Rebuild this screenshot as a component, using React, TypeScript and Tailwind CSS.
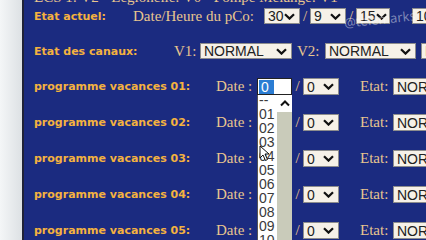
const serif = "font-['Liberation_Serif',serif] text-[15px] leading-none text-[#e8c68f]"
const label = "font-['DejaVu_Sans',Verdana,sans-serif] text-[11px] font-bold leading-none text-[#f4b23f]"

function Chevron() {
  return (
    <svg width="11" height="7" viewBox="0 0 11 7" className="shrink-0">
      <path d="M1 1.2 L5.5 5.6 L10 1.2" fill="none" stroke="#111" strokeWidth="2.2" />
    </svg>
  )
}

function Sel({ value, className }: { value: string; className: string }) {
  return (
    <div
      className={`flex shrink-0 items-center justify-between border border-[#8d8d8d] bg-[#f6f1e8] pl-[3px] pr-[4px] font-['Liberation_Sans',Arial,sans-serif] text-[14px] leading-none text-[#222] ${className}`}
    >
      <span>{value}</span>
      <Chevron />
    </div>
  )
}

const options = ['--', '01', '02', '03', '04', '05', '06', '07', '08', '09', '10', '11']

function OpenSelect() {
  return (
    <div className="relative h-[17px] w-[35px] shrink-0">
      <div className="flex h-full w-full items-start border border-[#222] bg-white pl-px pt-px font-['Liberation_Sans',Arial,sans-serif] text-[14px] leading-none">
        <span className="flex h-[14px] w-[15px] items-center bg-[#2b7dd3] pl-[2px] text-white">0</span>
      </div>
      <div className="absolute left-0 top-full z-10 flex h-[150px] w-[35px] overflow-hidden border-l border-[#555] bg-white">
        <div className="-mt-[2px] flex w-[20px] flex-col font-['Liberation_Sans',Arial,sans-serif] text-[14px] leading-none text-[#3a3a3a]">
          {options.map((o) => (
            <div key={o} className="flex h-[14px] shrink-0 items-center pl-[1px]">
              {o}
            </div>
          ))}
        </div>
        <div className="flex w-[15px] flex-col">
          <div className="flex h-[17px] items-center justify-center bg-white">
            <svg width="10" height="7" viewBox="0 0 10 7">
              <path d="M1 5.5 L5 1.5 L9 5.5" fill="none" stroke="#111" strokeWidth="2" />
            </svg>
          </div>
          <div className="flex-1 bg-[#c9cbba]" />
        </div>
        <svg width="11" height="17" viewBox="0 0 11 17" className="absolute left-[1px] top-[50px]">
          <path d="M1 1 L1 13 L4 10 L6.5 15.5 L8.5 14.5 L6 9 L10 9 Z" fill="#fff" stroke="#111" strokeWidth="1" />
        </svg>
      </div>
    </div>
  )
}

function ProgRow({ n, open }: { n: string; open?: boolean }) {
  return (
    <div className="mt-[19px] flex h-[17px] shrink-0 items-center whitespace-nowrap">
      <span className={`w-[182px] shrink-0 ${label}`}>programme vacances {n}:</span>
      <span className={`w-[41px] shrink-0 ${serif}`}>Date :</span>
      {open ? <OpenSelect /> : <Sel value="0" className="h-[17px] w-[35px]" />}
      <span className={`w-[11px] shrink-0 text-center ${serif}`}>/</span>
      <Sel value="0" className="h-[17px] w-[36px]" />
      <span className={`ml-[21px] w-[33px] shrink-0 ${serif}`}>Etat:</span>
      <Sel value="NORMAL" className="h-[17px] w-[90px]" />
    </div>
  )
}

export default function App() {
  return (
    <div className="flex h-[240px] w-[426px] overflow-hidden bg-[#1b2b80]">
      <div className="w-[22px] shrink-0 bg-gradient-to-r from-[#f4f6f7] to-[#dde1e4]" />
      <div className="w-[2px] shrink-0 bg-[#202338]" />
      <div className="relative min-w-0 flex-1 overflow-hidden pl-[10px]">
        <div className="-mt-[13px] flex flex-col">
          <div className="flex h-[20px] items-center whitespace-nowrap">
            <span className={serif}>ECS 1: V2 - Légionelle: V0 - Pompe Mélange: V1</span>
          </div>

          <div className="mt-[1px] flex h-[16px] items-center whitespace-nowrap">
            <span className={`w-[99px] shrink-0 ${label}`}>Etat actuel:</span>
            <span className={`w-[131px] shrink-0 ${serif}`}>Date/Heure du pCo:</span>
            <Sel value="30" className="h-[16px] w-[36px]" />
            <span className={`w-[10px] shrink-0 text-center ${serif}`}>/</span>
            <Sel value="9" className="h-[16px] w-[36px]" />
            <span className={`w-[10px] shrink-0 text-center ${serif}`}>/</span>
            <Sel value="15" className="h-[16px] w-[34px]" />
            <Sel value="10" className="ml-[22px] h-[16px] w-[40px]" />
          </div>

          <div className="mt-[19px] flex h-[16px] items-center whitespace-nowrap">
            <span className={`w-[140px] shrink-0 ${label}`}>Etat des canaux:</span>
            <span className={`w-[26px] shrink-0 ${serif}`}>V1:</span>
            <Sel value="NORMAL" className="h-[16px] w-[92px]" />
            <span className={`w-[33px] shrink-0 pl-[5px] ${serif}`}>V2:</span>
            <Sel value="NORMAL" className="h-[16px] w-[91px]" />
            <Sel value="NORMAL" className="ml-[5px] h-[16px] w-[90px]" />
          </div>

          <ProgRow n="01" open />
          <ProgRow n="02" />
          <ProgRow n="03" />
          <ProgRow n="04" />
          <ProgRow n="05" />
        </div>

        <span className="absolute left-[320px] top-[13px] -rotate-6 font-['Open_Sans',sans-serif] text-[13px] leading-none text-white/45">
          @telemarks
        </span>
      </div>
    </div>
  )
}
